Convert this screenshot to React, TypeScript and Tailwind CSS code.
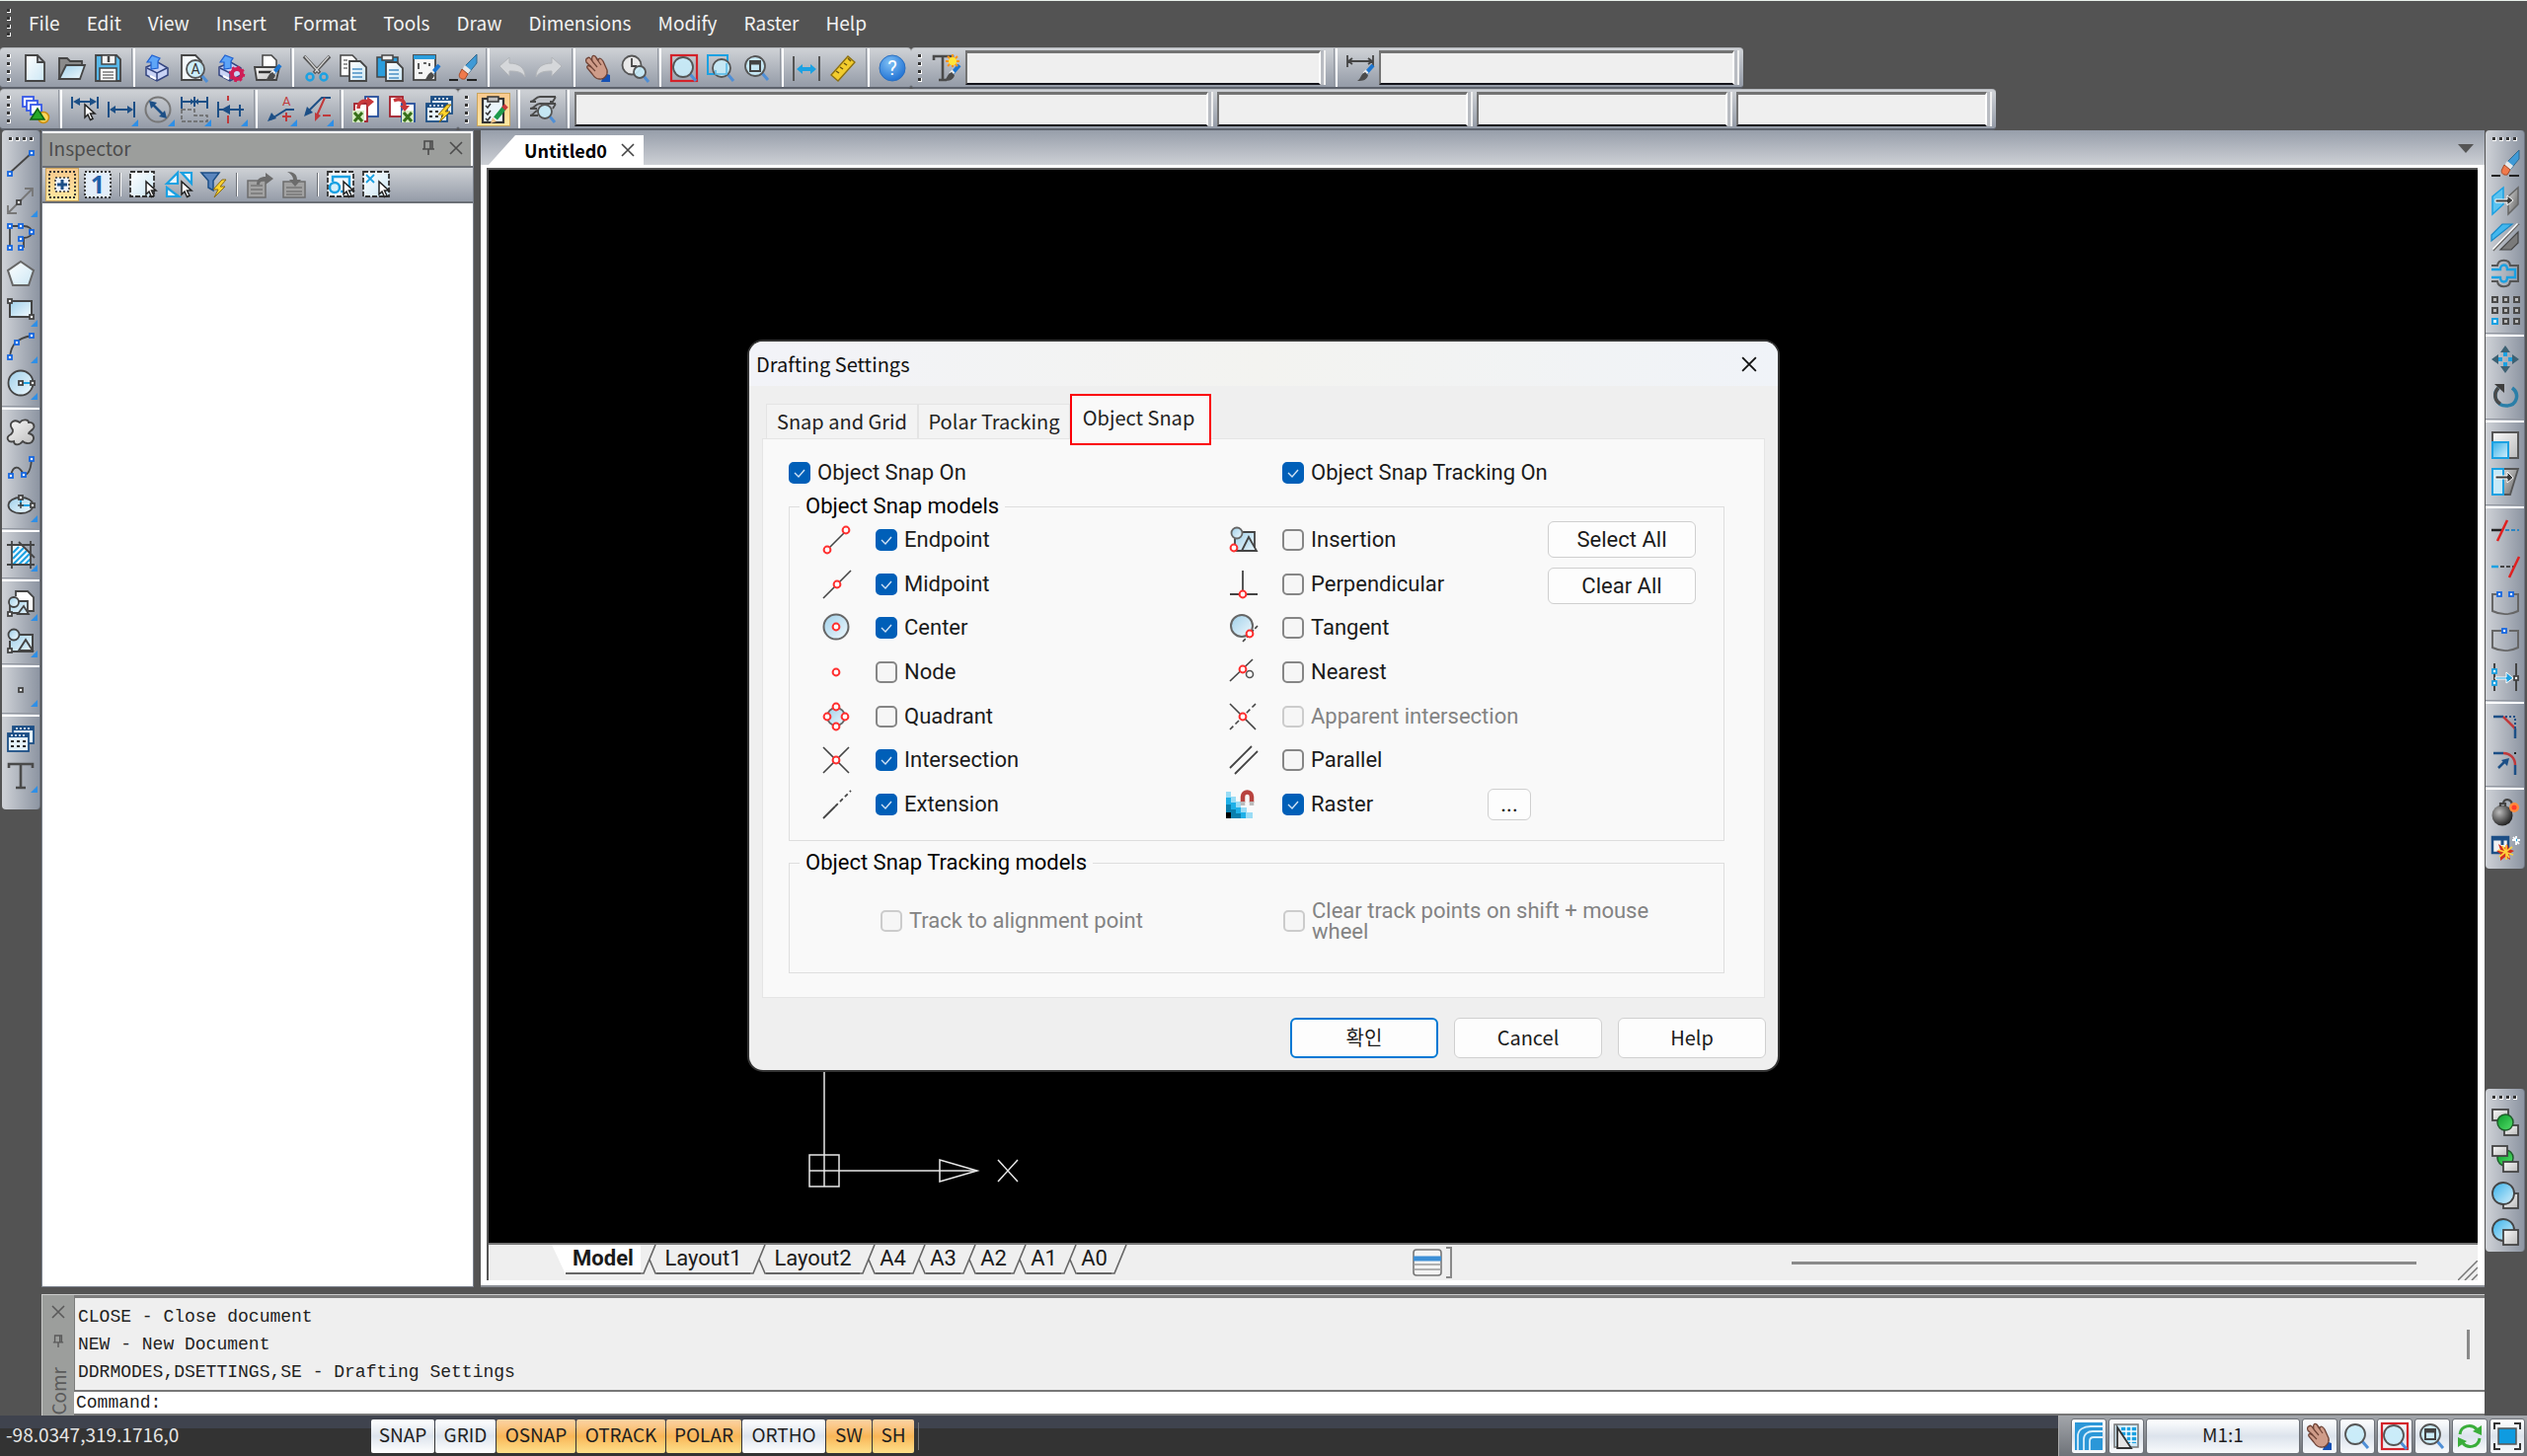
import React, { useState } from 'react';

const DARK = '#444444';
const CYAN = '#1ba1e2';
const NAVY = '#1c4f86';
const RED = '#c0393b';

const Gradients: React.FC = () => (
  <svg className="absolute h-0 w-0" aria-hidden="true">
    <defs>
      <linearGradient id="paper" x1="0" y1="0" x2="1" y2="1">
        <stop offset="0" stopColor="#ffffff" />
        <stop offset="1" stopColor="#cbe6f4" />
      </linearGradient>
      <linearGradient id="sky" x1="0" y1="0" x2="1" y2="1">
        <stop offset="0" stopColor="#9fd0ea" />
        <stop offset="1" stopColor="#f1f9fd" />
      </linearGradient>
      <linearGradient id="silver" x1="0" y1="0" x2="1" y2="1">
        <stop offset="0" stopColor="#fafafa" />
        <stop offset="1" stopColor="#bcbcbc" />
      </linearGradient>
      <linearGradient id="steel" x1="0" y1="0" x2="1" y2="1">
        <stop offset="0" stopColor="#d8d8d8" />
        <stop offset="1" stopColor="#5c5c5c" />
      </linearGradient>
      <linearGradient id="azure" x1="0" y1="0" x2="1" y2="1">
        <stop offset="0" stopColor="#35b0ea" />
        <stop offset="1" stopColor="#d9f1fb" />
      </linearGradient>
      <radialGradient id="help" cx="0.4" cy="0.3" r="0.8">
        <stop offset="0" stopColor="#7fc0f5" />
        <stop offset="1" stopColor="#1568cf" />
      </radialGradient>
      <radialGradient id="ball" cx="0.35" cy="0.35" r="0.7">
        <stop offset="0" stopColor="#bdbdbd" />
        <stop offset="1" stopColor="#1c1c1c" />
      </radialGradient>
      <linearGradient id="green" x1="0" y1="0" x2="1" y2="1">
        <stop offset="0" stopColor="#0b9a2c" />
        <stop offset="1" stopColor="#55e06a" />
      </linearGradient>
    </defs>
  </svg>
);

const Node = ({ x, y, c = '#1667e0' }: { x: number; y: number; c?: string }) => (
  <rect x={x - 2} y={y - 2} width="4" height="4" fill="#fff" stroke={c} strokeWidth="1.8" />
);

const Ring = ({ x, y }: { x: number; y: number }) => (
  <circle cx={x} cy={y} r="3.4" fill="#fff" stroke="#ff3030" strokeWidth="2" />
);

const Lens = ({ x, y, r }: { x: number; y: number; r: number }) => (
  <>
    <path d={`M${x + r * 0.7} ${y + r * 0.7}L${x + r + 3} ${y + r + 4}`} stroke="#4f8fd6" strokeWidth="3" />
    <circle cx={x} cy={y} r={r} fill="#c8ecf9" fillOpacity="0.9" stroke="#555" strokeWidth="1.8" />
  </>
);

const Cursor = ({ x, y }: { x: number; y: number }) => (
  <path
    d={`M${x} ${y}v13l3-3 2.5 5.5 2.5-1.2-2.5-5.3h4.5z`}
    fill="#fff"
    stroke="#222"
    strokeWidth="1.5"
  />
);

const Brush = () => (
  <>
    <path d="M27 11l-7 8" stroke="#1b75d0" strokeWidth="4" />
    <path d="M21 17l-3 3" stroke="#eee" strokeWidth="4" />
    <path d="M19 18l3 3c-1 5-5 6-11 6 4-2 3-7 8-9z" fill="#4b4b4b" />
  </>
);

const Bolt = () => <path d="M22 9l-9 10h5l-4 8 11-11h-5l6-7z" fill="#ffd52e" stroke="#8a6a10" strokeWidth="1" />;

const Printer = () => (
  <>
    <path d="M2 13l12-5 10 6v7l-11 6-11-6z" fill="#c9d3f5" stroke="#33447f" strokeWidth="1.5" />
    <path d="M3 14l10 5 10-5M13 19v7" fill="none" stroke="#33447f" strokeWidth="1.5" />
    <path d="M7 15V8H3l5-7 8 3-2 3v7z" fill="#5ea5f7" stroke="#1d5fd0" strokeWidth="1.2" />
    <path d="M6 22l6 3" stroke="#fff" strokeWidth="2" />
  </>
);

const Gear = () => (
  <>
    <circle cx="20" cy="20" r="5" fill="none" stroke="#cf1d56" strokeWidth="4" />
    <circle cx="20" cy="20" r="7" fill="none" stroke="#cf1d56" strokeWidth="2.5" strokeDasharray="2.7 2.8" />
  </>
);

const Hand = () => (
  <>
    <path d="M20 19l6 2v7h-9z" fill="#1450b4" />
    <path
      d="M3 4c2-2 3 0 5 3C7 3 8 0 11 2l3 4c1-3 3-2 5 1l4 9c1 5-3 10-8 9-3 0-5-2-7-5l-5-6c-1-3 1-3 4-1L2 8c-1-2 0-4 1-4z"
      fill="#cf9c89"
      stroke="#6e4336"
      strokeWidth="1.3"
    />
    <path d="M8 7l5 6M12 4l5 7M5 11l6 6" stroke="#6e4336" strokeWidth="1.2" />
  </>
);

const Eraser = () => (
  <>
    <path d="M0 26h9M18 26h10" stroke="#222" strokeWidth="2.2" />
    <path d="M28 0v9L19 20l-6-5z" fill="#3f9ad6" stroke="#31688e" strokeWidth="1" />
    <path d="M16 11l6 5-3 4-6-5z" fill="#e9e9e9" />
    <path d="M13 15l6 5-3 5c-5 1-7-3-5-6z" fill="#f07a4c" stroke="#a64a28" strokeWidth="1" />
  </>
);

const BlockShape = () => (
  <>
    <path d="M8 8h18v17H3V14" fill="url(#sky)" stroke={DARK} strokeWidth="2" />
    <circle cx="7" cy="8" r="5.5" fill="url(#sky)" stroke={DARK} strokeWidth="1.8" />
    <path d="M12 24l7-11 7 11z" fill="url(#sky)" stroke={DARK} strokeWidth="2" />
    <Node x={3} y={24} c={DARK} />
  </>
);

const ExcelDoc = ({ flip }: { flip?: boolean }) => (
  <>
    <rect x={flip ? 1 : 13} y="1" width="13" height="20" fill="#fff" stroke={flip ? '#a3202c' : '#264f9c'} strokeWidth="1.8" />
    <rect x={flip ? 13 : 2} y="8" width="13" height="18" fill="#fff" stroke={flip ? '#264f9c' : '#a3202c'} strokeWidth="1.8" />
    <rect x={flip ? 13 : 0} y="15" width="12" height="12" fill="#d7ecc4" />
    <path d={flip ? 'M15 17l8 9M23 17l-8 9' : 'M2 17l8 9M10 17l-8 9'} stroke="#37701a" strokeWidth="3" />
    <path d={flip ? 'M5 5c7-3 11 0 11 6' : 'M6 13c0-6 4-9 11-7'} fill="none" stroke="#c8383b" strokeWidth="3.5" />
    <path d={flip ? 'M11 10h10l-5 6z' : 'M15 1l7 5-7 6z'} fill="#c8383b" />
  </>
);

const Sheets = () => (
  <>
    <rect x="6" y="1" width="21" height="17" fill="#e4f1f9" stroke={NAVY} strokeWidth="1.8" />
    <path d="M6 3h21" stroke={NAVY} strokeWidth="4" />
    <path d="M9 3h16" stroke="#fff" strokeWidth="1.3" strokeDasharray="2 2" />
    <rect x="1" y="8" width="21" height="18" fill="#e4f1f9" stroke={NAVY} strokeWidth="1.8" />
    <path d="M1 10h21" stroke={NAVY} strokeWidth="4" />
    <path d="M4 10h16" stroke="#fff" strokeWidth="1.3" strokeDasharray="2 2" />
    <path d="M4 16h15M4 21h15" stroke="#222" strokeWidth="2" strokeDasharray="3 3" />
  </>
);

const icons: Record<string, React.ReactNode> = {
  new: <path d="M4 1h12l7 7v19H4zM16 1v7h7" fill="url(#paper)" stroke={DARK} strokeWidth="1.8" />,
  open: (
    <>
      <path d="M1 25V4h8l3 3h12v5" fill="#8a8a8a" stroke={DARK} strokeWidth="1.8" />
      <path d="M1 25L8 11h19l-5 14z" fill="url(#sky)" stroke={DARK} strokeWidth="1.8" />
    </>
  ),
  save: (
    <>
      <path d="M1 1h21l4 4v22H1z" fill="#58b7e8" stroke={DARK} strokeWidth="1.8" />
      <rect x="7" y="1" width="14" height="9" fill="#f4f4f4" stroke={DARK} strokeWidth="1.5" />
      <path d="M14 2v6" stroke={DARK} strokeWidth="2.5" />
      <rect x="5" y="14" width="17" height="13" fill="#fff" stroke={DARK} strokeWidth="1.5" />
      <path d="M8 18h11M8 21h11M8 24h11" stroke="#777" strokeWidth="1.3" />
    </>
  ),
  print: <Printer />,
  preview: (
    <>
      <path d="M1 1h14l6 6v19H1z" fill="#f4f9fc" stroke={DARK} strokeWidth="1.8" />
      <Lens x={15} y={15} r={9} />
      <text x="15" y="20" textAnchor="middle" fontSize="14" fill="#333" fontFamily="Roboto, sans-serif">A</text>
    </>
  ),
  printSetup: (
    <>
      <Printer />
      <Gear />
    </>
  ),
  pagePrint: (
    <>
      <path d="M9 13V1h9l5 5v7" fill="#fff" stroke={DARK} strokeWidth="1.5" />
      <path d="M1 13h25l-3 13H3z" fill="url(#silver)" stroke={DARK} strokeWidth="1.8" />
      <path d="M5 18h14" stroke="#333" strokeWidth="2.5" />
      <Brush />
    </>
  ),
  cut: (
    <>
      <path d="M1 2l16 17M27 2L11 19" stroke="#555" strokeWidth="3.5" />
      <path d="M2 2l14 16M26 2L12 18" stroke="#d8d8d8" strokeWidth="1.2" />
      <circle cx="7" cy="23" r="3.5" fill="none" stroke={CYAN} strokeWidth="2.5" />
      <circle cx="21" cy="23" r="3.5" fill="none" stroke={CYAN} strokeWidth="2.5" />
    </>
  ),
  copy: (
    <>
      <path d="M1 1h12l4 4v17H1z" fill="#fff" stroke={DARK} strokeWidth="1.5" />
      <path d="M4 6h4M4 10h4M4 14h4" stroke="#777" strokeWidth="1.5" />
      <path d="M10 7h11l6 6v14H10z" fill="url(#paper)" stroke={DARK} strokeWidth="1.8" />
      <path d="M13 15h10M13 19h10M13 23h10" stroke="#4a8fc4" strokeWidth="1.5" />
    </>
  ),
  paste: (
    <>
      <rect x="1" y="3" width="21" height="20" fill="#2a9ddc" stroke={DARK} strokeWidth="1.5" />
      <rect x="6" y="1" width="11" height="5" fill="#eee" stroke={DARK} strokeWidth="1.5" />
      <path d="M10 8h11l6 6v13H10z" fill="url(#paper)" stroke={DARK} strokeWidth="1.8" />
      <path d="M13 16h10M13 20h10M13 24h10" stroke="#4a8fc4" strokeWidth="1.5" />
    </>
  ),
  match: (
    <>
      <rect x="1" y="1" width="22" height="25" fill="#f5f5f5" stroke={DARK} strokeWidth="1.8" />
      <path d="M1 3h22" stroke="#2a9ddc" strokeWidth="4" />
      <path d="M6 9v6M11 9h3M17 9v3M6 19h4" stroke="#333" strokeWidth="1.6" />
      <Brush />
    </>
  ),
  erase: <Eraser />,
  undo: <path d="M1 12L11 3v6c9 0 16 4 16 14-3-5-8-6-16-6v5z" fill="#d5d7da" stroke="#b1b4b8" strokeWidth="1" />,
  redo: <path d="M27 12L17 3v6C8 9 1 13 1 23c3-5 8-6 16-6v5z" fill="#d5d7da" stroke="#b1b4b8" strokeWidth="1" />,
  hand: <Hand />,
  zoomTime: (
    <>
      <circle cx="11" cy="11" r="9.5" fill="#e9e9e9" stroke="#555" strokeWidth="1.8" />
      <path d="M11 4v8h5" fill="none" stroke="#444" strokeWidth="1.8" />
      <Lens x={19} y={18} r={6} />
    </>
  ),
  zoomRed: (
    <>
      <rect x="1" y="1" width="26" height="26" fill="none" stroke="#d3222a" strokeWidth="2.2" />
      <Lens x={13} y={13} r={10} />
    </>
  ),
  zoomWindow: (
    <>
      <rect x="1" y="1" width="20" height="19" fill="none" stroke={CYAN} strokeWidth="2" />
      <Lens x={15} y={14} r={9} />
      <path d="M9 16V20h11V9" fill="none" stroke="#5ab9e6" strokeWidth="1.5" />
    </>
  ),
  zoomExtents: (
    <>
      <Lens x={12} y={12} r={10} />
      <rect x="7" y="7" width="10" height="10" fill="none" stroke="#444" strokeWidth="2" />
      <path d="M7 9h10" stroke="#444" strokeWidth="3" />
    </>
  ),
  zoom: <Lens x={12} y={12} r={10} />,
  distance: (
    <>
      <path d="M1 2v25M27 2v25" stroke="#555" strokeWidth="2" />
      <path d="M4 15l6-5v3h8v-3l6 5-6 5v-3h-8v3z" fill={CYAN} />
    </>
  ),
  ruler: (
    <>
      <path d="M2 21L19 2l7 6L9 27z" fill="#f2cc2d" stroke="#8c6f10" strokeWidth="1.3" />
      <path d="M7 17l3 2M11 13l3 2M15 9l3 2M19 4l3 3" stroke="#6b5410" strokeWidth="1.5" />
    </>
  ),
  help: (
    <>
      <circle cx="14" cy="14" r="13" fill="url(#help)" stroke="#2a6fc0" strokeWidth="1" />
      <text x="14" y="21" textAnchor="middle" fontSize="20" fill="#fff" fontFamily="Roboto, sans-serif">?</text>
    </>
  ),
  textStyle: (
    <>
      <path d="M1 6V2h19v4M10 2v24M6 26h8" fill="none" stroke="#4a4a4a" strokeWidth="2.6" />
      <Brush />
      <path d="M20 0v13M13 7h14M15 2l10 10M25 2L15 12" stroke="#ff9418" strokeWidth="2" />
      <circle cx="20" cy="7" r="4" fill="#ffe63a" />
    </>
  ),
  dimStyle: (
    <>
      <path d="M1 1v12M27 1v12M2 7h24M6 4L2 7l4 3M22 4l4 3-4 3" fill="none" stroke="#444" strokeWidth="1.8" />
      <Brush />
    </>
  ),
  layerStates: (
    <>
      <rect x="1" y="1" width="11" height="10" fill="#fff" stroke="#3558e8" strokeWidth="1.8" />
      <rect x="5" y="5" width="11" height="10" fill="#fff" stroke="#3558e8" strokeWidth="1.8" />
      <rect x="9" y="9" width="11" height="10" fill="#fff" stroke="#3558e8" strokeWidth="1.8" />
      <circle cx="22" cy="22" r="5.5" fill="#ffd75a" stroke="#c98d12" strokeWidth="1.5" />
      <path d="M9 24l7-11 7 11z" fill="#28a928" stroke="#0d6412" strokeWidth="1.5" />
    </>
  ),
  dimSelect: (
    <>
      <path d="M1 1v12M27 1v12" stroke={NAVY} strokeWidth="2" />
      <path d="M2 6l7-4v3h10V2l7 4-7 4V7H9v3z" fill={NAVY} />
      <Cursor x={14} y={9} />
    </>
  ),
  dimLinear: (
    <>
      <path d="M1 6v16M27 6v16" stroke={NAVY} strokeWidth="2" />
      <path d="M2 14l6-4v3h12v-3l6 4-6 4v-3H8v3z" fill={NAVY} />
    </>
  ),
  dimDiameter: (
    <>
      <circle cx="14" cy="14" r="12.5" fill="none" stroke="#777" strokeWidth="2" />
      <path d="M8 8l12 12" stroke={NAVY} strokeWidth="2.5" />
      <path d="M5 5l8 2-6 6zM23 23l-8-2 6-6z" fill={NAVY} />
    </>
  ),
  dimBaseline: (
    <>
      <path d="M1 1v12M14 1v10M27 1v12M2 6h24" stroke={NAVY} strokeWidth="2" />
      <path d="M10 3l4 3-4 3zM18 3l-4 3 4 3z" fill={NAVY} />
      <path d="M1 14v12h26v-6H14v-6z" fill="none" stroke="#666" strokeWidth="1.5" strokeDasharray="4 2" />
    </>
  ),
  dimBreak: (
    <>
      <path d="M1 6v16M2 14h25" stroke={NAVY} strokeWidth="2" />
      <path d="M4 14l9-5v10z" fill={NAVY} />
      <path d="M23 9v12" stroke={NAVY} strokeWidth="2" />
      <path d="M11 0v5M11 20v8" stroke={RED} strokeWidth="2" />
    </>
  ),
  leaderAdd: (
    <>
      <path d="M28 14h-8L4 24" fill="none" stroke={NAVY} strokeWidth="2" />
      <path d="M1 26l4-9 5 6z" fill={NAVY} />
      <text x="16" y="10" fontSize="13" fill={RED} fontFamily="Roboto, sans-serif">A</text>
      <path d="M20 17v9M16 21h9" stroke={RED} strokeWidth="2" />
    </>
  ),
  leaderRemove: (
    <>
      <path d="M28 2h-9L3 18" fill="none" stroke={NAVY} strokeWidth="2" />
      <path d="M1 21l3-10 6 6z" fill={NAVY} />
      <path d="M22 2l-8 18M20 20h8" stroke={RED} strokeWidth="2" />
      <path d="M12 26v-9l6 3z" fill={RED} />
    </>
  ),
  excelUp: <ExcelDoc />,
  excelDown: <ExcelDoc flip />,
  tableUpdate: (
    <>
      <Sheets />
      <Bolt />
    </>
  ),
  clipboard: (
    <>
      <rect x="3" y="3" width="21" height="24" fill="#eaf4fa" stroke="#333" strokeWidth="2.2" />
      <rect x="8" y="1" width="11" height="5" fill="#bbb" stroke="#333" strokeWidth="1.5" />
      <path d="M6 10l2 2 3-4M6 17l2 2 3-4M6 23l2 2 3-4" fill="none" stroke="#333" strokeWidth="1.5" />
      <path d="M25 12l-9 11" stroke="#1c9a4b" strokeWidth="5" />
      <path d="M13 22l4 4-6 2z" fill="#f0c48a" />
      <path d="M27 10l-3 3" stroke="#c8383b" strokeWidth="5" />
    </>
  ),
  layerSearch: (
    <>
      <path
        d="M27 1H11C6 1 6 6 1 6h6M27 8H11C6 8 6 13 1 13h7M9 15c-4 0-4 5-8 5h8M21 6h3l3-5M24 13l3-5"
        fill="none"
        stroke="#4a4a4a"
        strokeWidth="1.8"
      />
      <Lens x={16} y={16} r={7} />
    </>
  ),
  addSelected: (
    <>
      <rect x="1" y="1" width="26" height="26" fill="none" stroke="#333" strokeWidth="1.8" strokeDasharray="2 2" />
      <rect x="7" y="7" width="14" height="14" fill="#eef3fb" stroke="#333" strokeWidth="1.5" strokeDasharray="2 2" />
      <path d="M14 9v10M9 14h10" stroke={NAVY} strokeWidth="3" />
    </>
  ),
  single: (
    <>
      <rect x="1" y="1" width="26" height="26" fill="#e3eefa" stroke="#333" strokeWidth="1.8" strokeDasharray="2 2" />
      <text x="14" y="23" textAnchor="middle" fontSize="25" fontWeight="700" fill="#1f5fa8" fontFamily="Noto Sans, sans-serif">1</text>
    </>
  ),
  pickBox: (
    <>
      <rect x="1" y="1" width="24" height="25" fill="url(#paper)" stroke="#333" strokeWidth="1.8" strokeDasharray="5 2" />
      <Cursor x={17} y={11} />
    </>
  ),
  quickSelect: (
    <>
      <path d="M2 13L13 2v11zM17 2h10v11zM2 17v9h12z" fill="#e9f6fc" stroke={CYAN} strokeWidth="2.2" />
      <Cursor x={17} y={11} />
    </>
  ),
  filter: (
    <>
      <path d="M1 2h18l-6 8v10l-5-3v-7z" fill="#5b86bd" stroke={NAVY} strokeWidth="1.5" />
      <Bolt />
    </>
  ),
  exportProps: (
    <>
      <rect x="2" y="10" width="18" height="17" fill="#a2a2a2" stroke="#6c6c6c" strokeWidth="1.5" />
      <path d="M5 15h12M5 19h12M5 23h12" stroke="#777" strokeWidth="1.5" />
      <path d="M11 14c0-6 4-8 9-8V2l8 6-8 6v-4c-4 0-6 1-6 4z" fill="#6c6c6c" />
    </>
  ),
  importProps: (
    <>
      <rect x="2" y="11" width="22" height="16" fill="#a2a2a2" stroke="#6c6c6c" strokeWidth="1.5" />
      <path d="M5 17h16M5 21h16M5 24h16" stroke="#777" strokeWidth="1.5" />
      <path d="M6 1c7 0 10 3 10 8h4l-6 7-6-7h4c0-3-2-6-6-8z" fill="#6c6c6c" />
    </>
  ),
  selectSimilar: (
    <>
      <rect x="1" y="1" width="26" height="25" fill="#f2f8fc" stroke="#333" strokeWidth="1.8" strokeDasharray="5 2" />
      <path d="M6 11V6h17v15h-9" fill="none" stroke={CYAN} strokeWidth="2.5" />
      <circle cx="8" cy="17" r="5" fill="#d7effa" stroke={CYAN} strokeWidth="2.5" />
      <Cursor x={17} y={11} />
    </>
  ),
  deselect: (
    <>
      <rect x="1" y="1" width="26" height="25" fill="url(#paper)" stroke="#333" strokeWidth="1.8" strokeDasharray="5 2" />
      <path d="M4 4l8 8M12 4l-8 8" stroke={CYAN} strokeWidth="1.8" />
      <Cursor x={17} y={11} />
    </>
  ),
  line: (
    <>
      <path d="M2 24L25 3" stroke={DARK} strokeWidth="1.8" />
      <Node x={3} y={24} />
      <Node x={25} y={3} />
    </>
  ),
  xline: (
    <>
      <path d="M2 26L26 2M18 2h8v8M10 27H1v-8" fill="none" stroke="#777" strokeWidth="1.8" />
      <Node x={12} y={16} c={DARK} />
    </>
  ),
  polyline: (
    <>
      <path d="M3 25V3h14c11 0 11 12 0 12v10" fill="none" stroke={DARK} strokeWidth="1.8" />
      <Node x={3} y={3} />
      <Node x={14} y={3} />
      <Node x={25} y={9} />
      <Node x={14} y={16} />
      <Node x={3} y={25} />
      <Node x={14} y={25} />
    </>
  ),
  polygon: <path d="M14 2l13 9-5 15H6L1 11z" fill="url(#paper)" stroke="#666" strokeWidth="2" />,
  rectangle: (
    <>
      <rect x="3" y="5" width="22" height="16" fill="url(#sky)" stroke={DARK} strokeWidth="2" />
      <Node x={3} y={5} c={DARK} />
      <Node x={25} y={21} c={DARK} />
    </>
  ),
  arc: (
    <>
      <path d="M3 25C4 12 10 6 25 3" fill="none" stroke={DARK} strokeWidth="1.8" />
      <Node x={3} y={25} />
      <Node x={10} y={10} />
      <Node x={25} y={3} />
    </>
  ),
  circle: (
    <>
      <circle cx="14" cy="14" r="12.5" fill="url(#sky)" stroke={DARK} strokeWidth="1.8" />
      <path d="M14 14h11" stroke={CYAN} strokeWidth="2" />
      <Node x={14} y={14} c={DARK} />
      <Node x={26} y={14} c={DARK} />
    </>
  ),
  cloud: (
    <path
      d="M5 10C1 4 8 0 13 4c3-4 9-3 9 0 5-1 7 4 4 7-2 2-4 3-4 4 5 1 7 5 3 9-3 2-7 1-9-1-4 5-9 4-9 0-6 2-9-4-3-7 2-2 3-4 1-6z"
      fill="url(#silver)"
      stroke={DARK}
      strokeWidth="1.8"
    />
  ),
  spline: (
    <>
      <path d="M4 21C6 10 12 11 16 18c2 4 8 2 9-14" fill="none" stroke={DARK} strokeWidth="1.8" />
      <Node x={4} y={21} />
      <Node x={17} y={20} />
      <Node x={25} y={4} />
    </>
  ),
  ellipse: (
    <>
      <ellipse cx="14" cy="14" rx="12.5" ry="8" fill="url(#sky)" stroke={DARK} strokeWidth="1.8" />
      <path d="M14 6v8h11" fill="none" stroke={CYAN} strokeWidth="2" />
      <path d="M14 11v6M11 14h6" stroke={DARK} strokeWidth="1.5" />
      <Node x={14} y={6} c={DARK} />
      <Node x={26} y={14} c={DARK} />
    </>
  ),
  hatch: (
    <>
      <path d="M5 5h12l7 9v10H5z" fill="#eaf7fd" />
      <path d="M6 12l6-6M6 18L17 7M6 24L20 10M12 24l11-11M18 24l6-6" stroke={CYAN} strokeWidth="2" />
      <path d="M0 4h28M0 24h28M5 0v28M24 0v28M12 1l16 16" stroke={DARK} strokeWidth="1.8" />
    </>
  ),
  blockMake: (
    <>
      <path d="M9 6V1h12l6 6v14h-5" fill="#fff" stroke={DARK} strokeWidth="1.8" />
      <path d="M10 11h11v12H3v-8" fill="url(#sky)" stroke={DARK} strokeWidth="1.8" />
      <circle cx="7" cy="12" r="5" fill="url(#sky)" stroke={DARK} strokeWidth="1.8" />
      <path d="M11 24l6-8 5 8z" fill="url(#sky)" stroke={DARK} strokeWidth="1.8" />
      <Node x={3} y={24} c={DARK} />
    </>
  ),
  blockInsert: <BlockShape />,
  point: <Node x={14} y={14} c={DARK} />,
  table: <Sheets />,
  text: <path d="M2 6V2h24v4M14 2v24M9 26h10" fill="none" stroke="#4a4a4a" strokeWidth="2.6" />,
  mirror: (
    <>
      <path d="M1 10L12 1v17L1 28z" fill="#5cc3f0" stroke={CYAN} strokeWidth="1.5" />
      <path d="M17 10L27 1v17L17 28z" fill="url(#steel)" stroke="#666" strokeWidth="1.5" />
      <path d="M4 13h12V9l6 5-6 5v-3H4z" fill="#3b3b3b" stroke="#fff" strokeWidth="1" />
    </>
  ),
  mirrorDiag: (
    <>
      <path d="M0 18V12L11 1h10z" fill="#43b7ee" stroke="#1688c6" strokeWidth="1.2" />
      <path d="M9 27L27 9v11l-7 7z" fill="#7a7a7a" stroke="#444" strokeWidth="1.2" />
      <path d="M2 27L27 1" stroke="#fff" strokeWidth="3" />
      <path d="M2 28L28 1" stroke="#666" strokeWidth="1.5" />
    </>
  ),
  offset: (
    <>
      <path d="M0 6h6c1-7 12-7 13 0h8v16h-8c-1 7-12 7-13 0H0" fill="none" stroke="#555" strokeWidth="2" />
      <path d="M0 10h9c0-6 7-6 7 0h8v8h-8c0 6-7 6-7 0H0" fill="none" stroke={CYAN} strokeWidth="2.4" />
    </>
  ),
  array: (
    <>
      {[3, 14, 25].map((x) => [3, 14, 25].map((y) => (
        <rect
          key={`${x}-${y}`}
          x={x - 2}
          y={y - 2}
          width="5"
          height="5"
          fill={x === 3 && y === 25 ? '#d6f0fb' : '#bdbdbd'}
          stroke={x === 3 && y === 25 ? CYAN : '#4a4a4a'}
          strokeWidth="2"
        />
      )))}
    </>
  ),
  move: (
    <>
      <path d="M14 6v5M14 17v5M6 14h5M17 14h5" stroke={CYAN} strokeWidth="4" />
      <path d="M14 0l5 7H9zM14 28l5-7H9zM0 14l7-5v10zM28 14l-7-5v10z" fill="#3d6173" />
    </>
  ),
  rotate: (
    <>
      <path d="M7 6c-6 6-3 18 8 18s14-12 6-18" fill="none" stroke="#2b7fa8" strokeWidth="3.5" />
      <path d="M7 6c-5 5-4 13 2 16" fill="none" stroke="#4a4a4a" strokeWidth="3.5" />
      <path d="M3 2h10v9z" fill="#3d3d3d" />
    </>
  ),
  scale: (
    <>
      <rect x="1" y="1" width="26" height="26" fill="url(#silver)" stroke="#555" strokeWidth="2" />
      <rect x="1" y="11" width="16" height="16" fill="url(#azure)" stroke={CYAN} strokeWidth="2" />
    </>
  ),
  stretch: (
    <>
      <path d="M12 1h15l-8 26h-7z" fill="url(#steel)" stroke="#555" strokeWidth="1.8" />
      <rect x="1" y="1" width="11" height="26" fill="#c8eaf8" stroke={CYAN} strokeWidth="2" />
      <path d="M4 8h12V4l6 6-6 5v-4H4z" fill="#3b3b3b" stroke="#fff" strokeWidth="1" />
    </>
  ),
  trim: (
    <>
      <path d="M0 13h11" stroke="#222" strokeWidth="2.5" />
      <path d="M14 13h14" stroke="#2a86c4" strokeWidth="2" strokeDasharray="4 2" />
      <path d="M16 3L6 24" stroke="#e02020" strokeWidth="2.5" />
    </>
  ),
  extend: (
    <>
      <path d="M0 13h7" stroke={CYAN} strokeWidth="2.5" />
      <path d="M9 13h14" stroke="#444" strokeWidth="2" strokeDasharray="4 2" />
      <path d="M28 3L18 24" stroke="#e02020" strokeWidth="2.5" />
    </>
  ),
  breakGap: (
    <>
      <path d="M6 4H1v17c8 4 18 4 26 0V4h-5" fill="none" stroke="#666" strokeWidth="2" />
      <Node x={8} y={4} />
      <Node x={20} y={4} />
    </>
  ),
  breakPoint: (
    <>
      <path d="M10 4H1v17c8 4 18 4 26 0V4h-9" fill="none" stroke="#666" strokeWidth="2" />
      <Node x={13} y={4} />
    </>
  ),
  join: (
    <>
      <path d="M3 0v28M25 0v28" stroke="#444" strokeWidth="2" />
      <path d="M4 14h11v-5l7 6-7 5v-4H4z" fill={CYAN} stroke="#fff" strokeWidth="1" />
      <Node x={3} y={8} c={CYAN} />
      <Node x={3} y={20} c={CYAN} />
      <Node x={25} y={15} c={DARK} />
    </>
  ),
  chamfer: (
    <>
      <path d="M2 4h10M24 16v10" stroke={NAVY} strokeWidth="2.5" />
      <path d="M12 4l12 12" stroke={RED} strokeWidth="2.5" />
      <path d="M14 4h10v12" fill="none" stroke={NAVY} strokeWidth="2" strokeDasharray="2 2" />
    </>
  ),
  fillet: (
    <>
      <path d="M2 4h10M24 16v10" stroke={NAVY} strokeWidth="2.5" />
      <path d="M12 4c7 0 12 5 12 12" fill="none" stroke={RED} strokeWidth="2.5" />
      <path d="M7 19l6-6" stroke={NAVY} strokeWidth="2.5" />
      <path d="M10 11l8-2-2 8z" fill={NAVY} />
      <path d="M24 3v2" stroke="#222" strokeWidth="2" />
    </>
  ),
  bomb: (
    <>
      <circle cx="11" cy="17" r="10.5" fill="url(#ball)" />
      <path d="M9 8V5h5v3M12 5c0-6 9-5 9 2" fill="none" stroke="#444" strokeWidth="2.2" />
      <circle cx="23" cy="9" r="5" fill="#ff8a3c" />
      <circle cx="23" cy="9" r="2.5" fill="#ff3c2a" />
    </>
  ),
  explode: (
    <>
      <path d="M1 2h16v16H1z" fill="#f2f2f2" stroke={NAVY} strokeWidth="2.5" />
      <path d="M1 4h16M11 2v8" stroke={NAVY} strokeWidth="3" />
      <path d="M7 9l6 4 3-4 2 5 5 2-5 3 1 6-5-3-5 4v-7l-4-3 4-1z" fill="#d3301f" />
      <path d="M11 11l7 12M21 12L8 22M7 15l15 5M15 10v15" stroke="#ffd23c" strokeWidth="1.6" />
      <path d="M25 1v9M21 5h8M22 2l6 7" stroke="#fff" strokeWidth="1.8" />
      <path d="M25 5h1" stroke={CYAN} strokeWidth="2.5" />
    </>
  ),
  bringFront: (
    <>
      <rect x="1" y="1" width="16" height="11" fill="url(#silver)" stroke={DARK} strokeWidth="1.8" />
      <rect x="13" y="17" width="14" height="10" fill="url(#silver)" stroke={DARK} strokeWidth="1.8" />
      <circle cx="14" cy="14" r="8" fill="url(#green)" stroke="#1f5c2b" strokeWidth="1.5" />
    </>
  ),
  sendBack: (
    <>
      <circle cx="14" cy="13" r="8" fill="url(#green)" stroke="#1f5c2b" strokeWidth="1.5" />
      <rect x="1" y="1" width="15" height="10" fill="url(#silver)" stroke={DARK} strokeWidth="1.8" />
      <rect x="12" y="17" width="15" height="10" fill="url(#silver)" stroke={DARK} strokeWidth="1.8" />
    </>
  ),
  bringAbove: (
    <>
      <rect x="12" y="12" width="15" height="15" fill="url(#silver)" stroke={DARK} strokeWidth="1.8" />
      <circle cx="12" cy="12" r="11" fill="url(#azure)" stroke={DARK} strokeWidth="1.8" />
    </>
  ),
  sendUnder: (
    <>
      <circle cx="12" cy="12" r="11" fill="url(#azure)" stroke={DARK} strokeWidth="1.8" />
      <rect x="12" y="12" width="15" height="15" fill="url(#silver)" stroke={DARK} strokeWidth="1.8" />
    </>
  ),
  lineWeight: (
    <>
      <rect x="0" y="0" width="28" height="28" fill="#2b97d8" />
      <path
        d="M3 28V14C3 7 9 4 16 4h12M9 28V17c0-5 4-8 9-8h10M15 28v-9c0-3 2-4 4-4h9"
        fill="none"
        stroke="#d8eefb"
        strokeWidth="1.8"
      />
    </>
  ),
  paperGrid: (
    <>
      <rect x="2" y="2" width="24" height="23" fill="#cfe9f7" stroke="#777" strokeWidth="1.5" />
      <rect x="9" y="5" width="15" height="16" fill={CYAN} />
      <path d="M9 9h16M9 14h16M9 19h16M14 4v18M19 4v18" stroke="#fff" strokeWidth="1.4" />
      <path d="M5 5v21h14z" fill="#e4e4e4" stroke="#333" strokeWidth="1.8" />
    </>
  ),
  refresh: (
    <>
      <path d="M4 12c1-9 12-11 17-5M24 16c-1 9-12 11-17 5" fill="none" stroke="#3aae3a" strokeWidth="3" />
      <path d="M26 3v10l-9-4zM2 25V15l9 4z" fill="#3aae3a" />
    </>
  ),
  fullscreen: (
    <>
      <path d="M1 7V1h6M21 1h6v6M27 21v6h-6M7 27H1v-6" fill="none" stroke="#333" strokeWidth="2" />
      <rect x="5" y="6" width="18" height="16" fill="#0f9be0" stroke="#555" strokeWidth="1.5" />
    </>
  ),
  snapEndpoint: (
    <>
      <path d="M5 23L23 5" stroke={DARK} strokeWidth="1.6" />
      <Ring x={4} y={24} />
      <Ring x={23} y={4} />
    </>
  ),
  snapMidpoint: (
    <>
      <path d="M0 28L28 0" stroke={DARK} strokeWidth="1.6" />
      <Ring x={14} y={14} />
    </>
  ),
  snapCenter: (
    <>
      <circle cx="13" cy="13" r="12.5" fill="url(#sky)" stroke="#666" strokeWidth="2" />
      <Ring x={13} y={13} />
    </>
  ),
  snapNode: <Ring x={13} y={14} />,
  snapQuadrant: (
    <>
      <circle cx="13" cy="14" r="9" fill="url(#sky)" stroke="#666" strokeWidth="1.8" />
      <Ring x={13} y={4} />
      <Ring x={4} y={14} />
      <Ring x={22} y={14} />
      <Ring x={13} y={24} />
    </>
  ),
  snapIntersection: (
    <>
      <path d="M0 1l26 26M26 1L0 27" stroke={DARK} strokeWidth="1.6" />
      <Ring x={13} y={14} />
    </>
  ),
  snapExtension: (
    <>
      <path d="M0 28l12-12" stroke={DARK} strokeWidth="1.8" />
      <path d="M12 16L28 0" stroke={DARK} strokeWidth="1.8" strokeDasharray="4 3" />
    </>
  ),
  snapInsertion: (
    <>
      <path d="M9 6h16v19H5V12" fill="url(#sky)" stroke={DARK} strokeWidth="1.8" />
      <circle cx="7" cy="7" r="5.5" fill="url(#sky)" stroke="#666" strokeWidth="1.8" />
      <path d="M12 25l7-14 8 14z" fill="url(#sky)" stroke={DARK} strokeWidth="1.8" />
      <Ring x={4} y={22} />
    </>
  ),
  snapPerpendicular: (
    <>
      <path d="M13 0v24M0 24h28" stroke={DARK} strokeWidth="1.8" />
      <Ring x={13} y={24} />
    </>
  ),
  snapTangent: (
    <>
      <circle cx="12" cy="12" r="11" fill="url(#sky)" stroke="#666" strokeWidth="2" />
      <path d="M13 28l15-16" stroke={DARK} strokeWidth="1.6" strokeDasharray="4 2" />
      <Ring x={20} y={20} />
    </>
  ),
  snapNearest: (
    <>
      <path d="M0 23L23 1" stroke={DARK} strokeWidth="1.6" />
      <circle cx="20" cy="16" r="3.5" fill="#fff" stroke="#555" strokeWidth="1.6" />
      <Ring x={13} y={11} />
    </>
  ),
  snapApparent: (
    <>
      <path d="M0 1l26 26" stroke={DARK} strokeWidth="1.6" />
      <path d="M26 1L0 27" stroke={DARK} strokeWidth="1.6" strokeDasharray="5 3" />
      <Ring x={13} y={14} />
    </>
  ),
  snapParallel: <path d="M0 22L22 0M5 28L28 5" stroke={DARK} strokeWidth="1.8" />,
  snapRaster: (
    <>
      <path d="M-4 1h5v5h5v5h5v6h6v5h6v6H-4z" fill="#9adcf5" />
      <path d="M-4 7h5v5h5v5h5v5h5v6H-4z" fill="#1fb0e8" />
      <path d="M-4 14h5v5h5v4h5v5H-4z" fill="#0a7fae" />
      <rect x="-4" y="22" width="5" height="6" fill="#000" />
      <path d="M13 12V6c0-6 9-6 9 0v6" fill="none" stroke="#b8433f" strokeWidth="4.5" />
      <path d="M13 11v4M22 11v4" stroke="#bbb" strokeWidth="4.5" />
    </>
  ),
};

const Icon = ({ name, flyout }: { name: string; flyout?: boolean }) => (
  <svg viewBox="0 0 28 28" className="h-7 w-7 shrink-0 overflow-visible" fill="none" aria-hidden="true">
    {icons[name]}
    {flyout && <path d="M31 24v7h-7z" fill="#2f8fe6" />}
  </svg>
);

const ToolButton = ({ name, flyout, active }: { name: string; flyout?: boolean; active?: boolean }) => (
  <button
    type="button"
    aria-label={name}
    className={
      active
        ? '-m-[3px] border border-[#c9a45c] bg-gradient-to-b from-[#f9c98e] to-[#fde9a0] p-[2px]'
        : 'block'
    }
  >
    <Icon name={name} flyout={flyout} />
  </button>
);

// Trailing "+" marks a tool with a flyout, "|" is a separator, "*" a pressed tool.
const ToolList = ({ items, vertical }: { items: string[]; vertical?: boolean }) => (
  <>
    {items.map((item, i) =>
      item === '|' ? (
        vertical ? (
          <span key={i} className="h-1 w-full border-t border-b-2 border-t-[#9297a0] border-b-white" />
        ) : (
          <span key={i} className="w-1 self-stretch border-r-2 border-l border-r-white border-l-[#9297a0]" />
        )
      ) : (
        <ToolButton
          key={i}
          name={item.replace(/[+*]/, '')}
          flyout={item.endsWith('+')}
          active={item.endsWith('*')}
        />
      ),
    )}
  </>
);

const Grip = ({ vertical }: { vertical?: boolean }) => (
  <span className={vertical ? 'flex gap-[3px]' : 'mr-[2px] flex flex-col gap-1'}>
    {[0, 1, 2, 3].map((i) => (
      <span key={i} className="h-1 w-1 border-r border-b border-white bg-[#333333]" />
    ))}
  </span>
);

const Toolbar = ({ children }: { children: React.ReactNode }) => (
  <div className="flex h-full items-center gap-[9px] rounded-[4px] border-t border-b-2 border-t-[#b5b8bd] border-b-[#5d626c] bg-gradient-to-b from-[#cfd2d6] to-[#949ba7] pr-[5px] pl-[7px]">
    {children}
  </div>
);

const SideBar = ({ items, className }: { items: string[]; className: string }) => (
  <div
    className={`flex flex-col items-center gap-[9px] rounded-[4px] border-r border-[#6d7480] bg-gradient-to-r from-[#cfd2d7] to-[#8d95a2] pt-[7px] ${className}`}
  >
    <Grip vertical />
    <ToolList items={items} vertical />
  </div>
);

const Combo = ({ label, className }: { label: string; className: string }) => (
  <select
    aria-label={label}
    className={`-ml-1 mr-1 h-[35px] appearance-none border-t-[3px] border-r-2 border-b-2 border-l-2 border-t-[#737373] border-r-white border-b-[#15151c] border-l-[#737373] bg-[#efefef] shadow-[3px_0_0_0_#b9bcc2,5px_0_0_0_#f0f0f0] ${className}`}
  />
);

const CloseGlyph = ({ className }: { className: string }) => (
  <svg viewBox="0 0 14 14" className={className} fill="none" stroke="currentColor" aria-hidden="true">
    <path d="M1 1l12 12M13 1L1 13" strokeWidth="1.6" />
  </svg>
);

const PinGlyph = ({ className }: { className: string }) => (
  <svg viewBox="0 0 14 16" className={className} fill="none" stroke="currentColor" strokeWidth="1.6" aria-hidden="true">
    <path d="M3 9V1h8v8M1 9h12M7 9v6M9 1v8" />
  </svg>
);

interface CheckProps {
  label: string;
  checked?: boolean;
  disabled?: boolean;
  className?: string;
}

const Check: React.FC<CheckProps> = ({ label, checked = false, disabled, className = '' }) => {
  const [on, setOn] = useState(checked);
  return (
    <label className={`flex items-center gap-[7px] ${disabled ? 'text-[#838383]' : 'text-[#1b1b1b]'} ${className}`}>
      <span className="grid shrink-0">
        <input
          type="checkbox"
          checked={on}
          disabled={disabled}
          onChange={() => setOn(!on)}
          className="h-[22px] w-[22px] appearance-none rounded-[5px] border-2 border-[#868686] bg-[#f6f6f6] [grid-area:1/1] checked:border-[#005fb8] checked:bg-[#005fb8] disabled:border-[#cccccc]"
        />
        {on && (
          <svg viewBox="0 0 22 22" className="pointer-events-none h-[22px] w-[22px] [grid-area:1/1]" fill="none" aria-hidden="true">
            <path d="M6 11l4 4 6-7" stroke="#cfe2f4" strokeWidth="1.4" />
          </svg>
        )}
      </span>
      {label}
    </label>
  );
};

interface SnapMode {
  icon: string;
  label: string;
  checked?: boolean;
  disabled?: boolean;
}

const leftModes: SnapMode[] = [
  { icon: 'snapEndpoint', label: 'Endpoint', checked: true },
  { icon: 'snapMidpoint', label: 'Midpoint', checked: true },
  { icon: 'snapCenter', label: 'Center', checked: true },
  { icon: 'snapNode', label: 'Node' },
  { icon: 'snapQuadrant', label: 'Quadrant' },
  { icon: 'snapIntersection', label: 'Intersection', checked: true },
  { icon: 'snapExtension', label: 'Extension', checked: true },
];

const rightModes: SnapMode[] = [
  { icon: 'snapInsertion', label: 'Insertion' },
  { icon: 'snapPerpendicular', label: 'Perpendicular' },
  { icon: 'snapTangent', label: 'Tangent' },
  { icon: 'snapNearest', label: 'Nearest' },
  { icon: 'snapApparent', label: 'Apparent intersection', disabled: true },
  { icon: 'snapParallel', label: 'Parallel' },
  { icon: 'snapRaster', label: 'Raster', checked: true },
];

const ModeList = ({ modes, className }: { modes: SnapMode[]; className: string }) => (
  <div className={`flex h-[290px] flex-col justify-between ${className}`}>
    {modes.map((mode) => (
      <div key={mode.icon} className="flex h-[22px] items-center gap-[25px]">
        <Icon name={mode.icon} />
        <Check label={mode.label} checked={mode.checked} disabled={mode.disabled} />
        {mode.icon === 'snapRaster' && (
          <button
            type="button"
            aria-label="Raster options"
            className="mr-[17px] ml-auto h-8 w-11 shrink-0 rounded-[6px] border border-[#cfcfcf] bg-[#fdfdfd]"
          >
            ...
          </button>
        )}
      </div>
    ))}
  </div>
);

const pushButton = 'w-[150px] rounded-[6px] bg-[#fdfdfd] text-[#1b1b1b]';

const DraftingSettings: React.FC = () => (
  <div
    role="dialog"
    aria-label="Drafting Settings"
    className="w-[1042px] rounded-[14px] bg-[#efefef] font-['Roboto',sans-serif] text-[22px] leading-6 shadow-[0_0_0_2px_#333333]"
  >
    <div className="flex h-[45px] items-center justify-between rounded-t-[14px] bg-gradient-to-r from-[#f2f3f8] via-[#f3f3f0] to-[#f0f3f8] pr-[21px] pl-[7px] font-['Noto_Sans_CJK_KR','Noto_Sans',sans-serif] text-[20px] text-[#111111]">
      <h1>Drafting Settings</h1>
      <button type="button" aria-label="Close">
        <CloseGlyph className="h-4 w-4" />
      </button>
    </div>

    <div
      role="tablist"
      className="flex items-end px-[17px] pt-2 font-['Noto_Sans_CJK_KR','Noto_Sans',sans-serif] text-[20px] text-[#222222]"
    >
      <button type="button" role="tab" className="h-[35px] w-[154px] border border-b-0 border-[#e4e4e4] bg-[#f3f3f3] pb-px">
        Snap and Grid
      </button>
      <button type="button" role="tab" className="h-[35px] w-[154px] border border-b-0 border-[#e4e4e4] bg-[#f3f3f3] pb-px">
        Polar Tracking
      </button>
      <button
        type="button"
        role="tab"
        aria-selected="true"
        className="relative -mb-[7px] h-[52px] w-[143px] border-2 border-[#fb0007] bg-[#f9f9f9] pr-1 pb-1"
      >
        Object Snap
      </button>
    </div>

    <div className="mx-[13px] border border-[#e5e5e5] bg-[#f9f9f9] pt-[22px] pr-10 pb-6 pl-[26px]">
      <div className="flex">
        <Check label="Object Snap On" checked className="w-[500px]" />
        <Check label="Object Snap Tracking On" checked />
      </div>

      <fieldset className="mt-[10px] flex border border-[#dedede] pt-[11px] pb-[25px] pl-[34px]">
        <legend className="ml-[-24px] px-[6px]">Object Snap models</legend>
        <ModeList modes={leftModes} className="w-[412px]" />
        <ModeList modes={rightModes} className="w-[322px]" />
        <div className="-mt-2 flex flex-col gap-[10px]">
          <button type="button" className={`h-[37px] border border-[#cfcfcf] ${pushButton}`}>
            Select All
          </button>
          <button type="button" className={`h-[37px] border border-[#cfcfcf] ${pushButton}`}>
            Clear All
          </button>
        </div>
      </fieldset>

      <fieldset className="mt-[10px] flex h-[124px] items-center border border-[#dedede] pb-[6px] pl-[92px]">
        <legend className="ml-[-82px] px-[6px]">Object Snap Tracking models</legend>
        <Check label="Track to alignment point" disabled className="w-[408px]" />
        <Check label="Clear track points on shift + mouse wheel" disabled className="w-[390px] leading-[21px]" />
      </fieldset>
    </div>

    <div className="flex justify-end gap-4 pt-5 pr-3 pb-3 font-['Noto_Sans_CJK_KR','Noto_Sans',sans-serif] text-[20px]">
      <button type="button" className={`h-[41px] border-2 border-[#0078d4] pb-[2px] ${pushButton}`}>
        확인
      </button>
      <button type="button" className={`h-[41px] border border-[#d0d0d0] pb-[2px] ${pushButton}`}>
        Cancel
      </button>
      <button type="button" className={`h-[41px] border border-[#d0d0d0] pb-[2px] ${pushButton}`}>
        Help
      </button>
    </div>
  </div>
);

const Inspector: React.FC = () => (
  <aside className="ml-px flex w-[438px] flex-col border border-[#7b828d] bg-white">
    <header className="flex h-[35px] items-center gap-[14px] border-t-2 border-r-2 border-white bg-[#9c9e9c] pr-2 pb-1 pl-[6px] text-[19px] text-[#4c4c4c]">
      <h2 className="mr-auto">Inspector</h2>
      <PinGlyph className="h-4 w-[14px]" />
      <CloseGlyph className="h-[14px] w-[14px]" />
    </header>
    <div className="flex h-[38px] items-center gap-2 border-y-2 border-[#6b6f76] bg-gradient-to-b from-[#cfd2d6] to-[#959ca8] pl-[6px]">
      <ToolList items={['addSelected*', 'single']} />
      <span className="h-6 w-[2px] border-r border-white bg-[#6b6f76]" />
      <ToolList items={['pickBox', 'quickSelect', 'filter']} />
      <span className="h-6 w-[2px] border-r border-white bg-[#6b6f76]" />
      <ToolList items={['exportProps', 'importProps']} />
      <span className="h-6 w-[2px] border-r border-white bg-[#6b6f76]" />
      <ToolList items={['selectSimilar', 'deselect']} />
    </div>
  </aside>
);

const TabEdge = ({ last }: { last?: boolean }) => (
  <svg viewBox="0 0 16 30" className="h-[30px] w-4 shrink-0" fill="none" stroke="#666" strokeWidth="1.6" aria-hidden="true">
    <path d="M15 0L3 29H0" />
    {!last && <path d="M9 15l6 14h1" />}
  </svg>
);

const layouts = [
  { name: 'Layout1', width: 'w-[95px]' },
  { name: 'Layout2', width: 'w-[95px]' },
  { name: 'A4', width: 'w-[35px]' },
  { name: 'A3', width: 'w-[35px]' },
  { name: 'A2', width: 'w-[35px]' },
  { name: 'A1', width: 'w-[35px]' },
  { name: 'A0', width: 'w-[35px]' },
];

const LayoutTabs: React.FC = () => (
  <div role="tablist" className="flex h-[30px] font-['Roboto',sans-serif] text-[22px] leading-[26px] text-[#1b1b1b]">
    <span className="w-[14px] bg-white [clip-path:polygon(0_0,100%_0,100%_100%)]" />
    <button type="button" role="tab" aria-selected="true" className="w-[76px] border-b-2 border-[#666666] bg-white font-bold">
      Model
    </button>
    {layouts.map((layout) => (
      <React.Fragment key={layout.name}>
        <TabEdge />
        <button type="button" role="tab" className={`border-b-2 border-[#666666] ${layout.width}`}>
          {layout.name}
        </button>
      </React.Fragment>
    ))}
    <TabEdge last />
  </div>
);

const Document: React.FC = () => (
  <main className="ml-[7px] flex flex-1 flex-col border-b-2 border-[#8b8f96] bg-white">
    <div className="flex h-[35px] items-end justify-between bg-gradient-to-b from-[#979eaa] to-[#cdd0d5] pr-[11px] pl-2">
      <div className="flex h-[30px] items-center gap-[14px] bg-white pr-[9px] pl-9 text-[18px] [clip-path:polygon(27px_0,100%_0,100%_100%,0_100%)]">
        <span className="font-bold text-black">Untitled0</span>
        <button type="button" aria-label="Close document" className="text-[#444444]">
          <CloseGlyph className="h-[14px] w-[14px]" />
        </button>
      </div>
      <svg viewBox="0 0 16 9" className="mb-3 h-[9px] w-4" aria-hidden="true">
        <path d="M0 0h16l-8 9z" fill="#555" />
      </svg>
    </div>
    <div className="mt-[3px] mr-[7px] ml-[6px] flex flex-1 flex-col border-t-2 border-l-2 border-[#555555]">
      <div className="relative flex-1 bg-black">
        <svg
          viewBox="0 0 216 240"
          className="absolute bottom-14 left-[324px] h-[240px] w-[216px]"
          fill="none"
          stroke="#e8e8e8"
          strokeWidth="1.5"
          aria-hidden="true"
        >
          <path d="M1 207h30v32H1zM16 0v239M1 223h170" />
          <path d="M133 212v22l38-11zM192 212l20 22M212 212l-20 22" />
        </svg>
      </div>
      <div className="flex h-[38px] items-start border-t-2 border-[#777777] bg-[#efefef] pl-[64px]">
        <LayoutTabs />
        <div className="mr-[42px] flex flex-1 items-center self-stretch">
          <svg viewBox="0 0 30 28" className="ml-auto h-7 w-[30px]" fill="none" aria-hidden="true">
            <rect x="1" y="1" width="28" height="26" rx="3" fill="#f4f4f4" stroke="#777" strokeWidth="1.6" />
            <path d="M1 10h28" stroke="#3c8fd6" strokeWidth="5" />
            <path d="M1 16h28M1 21h28" stroke="#999" strokeWidth="1.5" />
          </svg>
          <span className="ml-1 h-8 w-[6px] border-y-2 border-r-2 border-[#8a8a8a]" />
          <span className="ml-[344px] h-[3px] w-[633px] bg-[#8a8a8a]" />
        </div>
        <svg viewBox="0 0 20 20" className="h-5 w-5 shrink-0 self-end" fill="none" stroke="#777" strokeWidth="1.5" aria-hidden="true">
          <path d="M0 20L20 0M7 20L20 7M14 20l6-6" />
        </svg>
      </div>
    </div>
    <div className="h-[5px]" />
  </main>
);

const CommandPanel: React.FC = () => (
  <section className="mt-[7px] mr-[43px] ml-[42px] flex h-[123px] border-t border-l border-[#cccccc] bg-[#efefef]">
    <div className="flex w-8 flex-col items-center gap-3 bg-[#9c9e9c] pt-[10px] text-[#5a5a5a]">
      <CloseGlyph className="h-[14px] w-[14px] shrink-0" />
      <PinGlyph className="mt-1 h-[14px] w-3 shrink-0" />
      <span className="mt-auto rotate-180 text-[19px] leading-6 [writing-mode:vertical-rl]">Comr</span>
    </div>
    <div className="flex flex-1 flex-col text-[#222222]">
      <div className="flex flex-1 items-center border-t-[3px] border-l border-[#7d7d7d] pr-[15px]">
        <pre className="pl-[3px] font-['Liberation_Mono',monospace] text-[18px] leading-7">
          {'CLOSE - Close document\nNEW - New Document\nDDRMODES,DSETTINGS,SE - Drafting Settings'}
        </pre>
        <span className="ml-auto h-[30px] w-[3px] bg-[#8a8a8a]" />
      </div>
      <label className="flex h-[26px] items-center border-y-2 border-[#777777] bg-white pl-[2px] font-['Liberation_Mono',monospace] text-[18px]">
        Command:
        <input type="text" className="h-full flex-1 outline-none" />
      </label>
    </div>
  </section>
);

const modeButtons = [
  { label: 'SNAP', width: 'w-[64px]' },
  { label: 'GRID', width: 'w-[61px]' },
  { label: 'OSNAP', width: 'w-[80px]', on: true },
  { label: 'OTRACK', width: 'w-[90px]', on: true },
  { label: 'POLAR', width: 'w-[76px]', on: true },
  { label: 'ORTHO', width: 'w-[84px]' },
  { label: 'SW', width: 'w-[46px]', on: true },
  { label: 'SH', width: 'w-[42px]', on: true },
];

const statusButton =
  'flex h-9 items-center justify-center rounded-[3px] border border-[#6d7178] bg-gradient-to-b from-white via-[#dce3ec] to-[#f8fafc]';

const StatusBar: React.FC = () => (
  <footer className="flex h-[41px] items-center bg-[linear-gradient(#3f434e_0_13px,#333333_13px)] text-[19px] text-[#e6e6e6]">
    <span className="w-[376px] pb-[3px] pl-[6px]">-98.0347,319.1716,0</span>
    <div className="flex gap-px text-[#1f1f1f]">
      {modeButtons.map((b) => (
        <button
          key={b.label}
          type="button"
          aria-pressed={Boolean(b.on)}
          className={`h-[34px] rounded-[2px] pb-[3px] ${b.width} ${
            b.on
              ? 'bg-gradient-to-b from-[#fbd3a4] via-[#f9b657] to-[#fde08a]'
              : 'bg-gradient-to-b from-white via-[#dde4ed] to-white'
          }`}
        >
          {b.label}
        </button>
      ))}
    </div>
    <span className="ml-1 h-7 w-px bg-[#777777]" />
    <div className="ml-auto flex h-full items-center gap-[2px] border-l border-[#aaaaaa] bg-gradient-to-b from-[#a3a6ab] to-[#6f7379] pr-[2px] pl-3 text-[#1f1f1f]">
      {['lineWeight', 'paperGrid'].map((name) => (
        <button key={name} type="button" aria-label={name} className={`w-9 ${statusButton}`}>
          <Icon name={name} />
        </button>
      ))}
      <button type="button" className={`w-[156px] pb-[3px] ${statusButton}`}>
        M1:1
      </button>
      {['hand', 'zoom', 'zoomRed', 'zoomExtents', 'refresh', 'fullscreen'].map((name) => (
        <button key={name} type="button" aria-label={name} className={`w-9 ${statusButton}`}>
          <Icon name={name} />
        </button>
      ))}
    </div>
  </footer>
);

const menus = ['File', 'Edit', 'View', 'Insert', 'Format', 'Tools', 'Draw', 'Dimensions', 'Modify', 'Raster', 'Help'];

const App: React.FC = () => (
  <div className="relative flex min-h-screen flex-col bg-[#535353] font-['Noto_Sans_CJK_KR','Noto_Sans',sans-serif] text-[20px] leading-6">
    <Gradients />
    <nav className="flex h-12 items-center border-t border-[#e8f0ea] pb-[3px] pl-[7px] text-[19px] text-[#f2f2f2]">
      <Grip />
      <div className="ml-4 flex gap-[27px]">
        {menus.map((menu) => (
          <button key={menu} type="button">
            {menu}
          </button>
        ))}
      </div>
    </nav>

    <div className="flex h-[42px]">
      <Toolbar>
        <Grip />
        <ToolList
          items={[
            'new', 'open', 'save', '|', 'print', 'preview', 'printSetup', 'pagePrint', '|',
            'cut', 'copy', 'paste', 'match', 'erase', '|', 'undo', 'redo', '|', 'hand', 'zoomTime', '|',
            'zoomRed', 'zoomWindow', 'zoomExtents', '|', 'distance', 'ruler', '|', 'help',
          ]}
        />
      </Toolbar>
      <Toolbar>
        <Grip />
        <ToolList items={['textStyle']} />
        <Combo label="Text style" className="w-[360px]" />
        <ToolList items={['|', 'dimStyle']} />
        <Combo label="Dimension style" className="w-[360px]" />
      </Toolbar>
    </div>

    <div className="flex h-[42px]">
      <Toolbar>
        <Grip />
        <ToolList
          items={[
            'layerStates', '|', 'dimSelect', 'dimLinear+', 'dimDiameter+', 'dimBaseline+', 'dimBreak+', '|',
            'leaderAdd+', 'leaderRemove+', '|', 'excelUp', 'excelDown', 'tableUpdate',
          ]}
        />
      </Toolbar>
      <Toolbar>
        <Grip />
        <ToolList items={['clipboard*', '|', 'layerSearch', '|']} />
        <Combo label="Layer" className="w-[642px]" />
        <Combo label="Color" className="w-[254px]" />
        <Combo label="Linetype" className="w-[254px]" />
        <Combo label="Lineweight" className="w-[254px]" />
      </Toolbar>
    </div>

    <div className="flex flex-1">
      <SideBar
        className="ml-[2px] w-[39px] self-start pb-5"
        items={[
          'line', 'xline+', 'polyline', 'polygon', 'rectangle+', 'arc+', 'circle+', '|',
          'cloud', 'spline', 'ellipse+', '|', 'hatch+', '|', 'blockMake+', 'blockInsert+', '|',
          'point+', '|', 'table', 'text+',
        ]}
      />
      <Inspector />
      <Document />
      <div className="mr-[2px] ml-px flex flex-col justify-between">
        <SideBar
          className="w-10 pb-[6px]"
          items={[
            'erase', 'mirror', 'mirrorDiag', 'offset', 'array', '|', 'move', 'rotate', '|', 'scale', 'stretch', '|',
            'trim', 'extend', 'breakGap', 'breakPoint', 'join', '|', 'chamfer', 'fillet', '|', 'bomb', 'explode',
          ]}
        />
        <SideBar className="mb-9 w-10 pb-[6px]" items={['bringFront', 'sendBack', 'bringAbove', 'sendUnder']} />
      </div>
    </div>

    <CommandPanel />
    <StatusBar />

    <div className="absolute inset-0 flex items-center justify-center pb-[45px]">
      <DraftingSettings />
    </div>
  </div>
);

export default App;
